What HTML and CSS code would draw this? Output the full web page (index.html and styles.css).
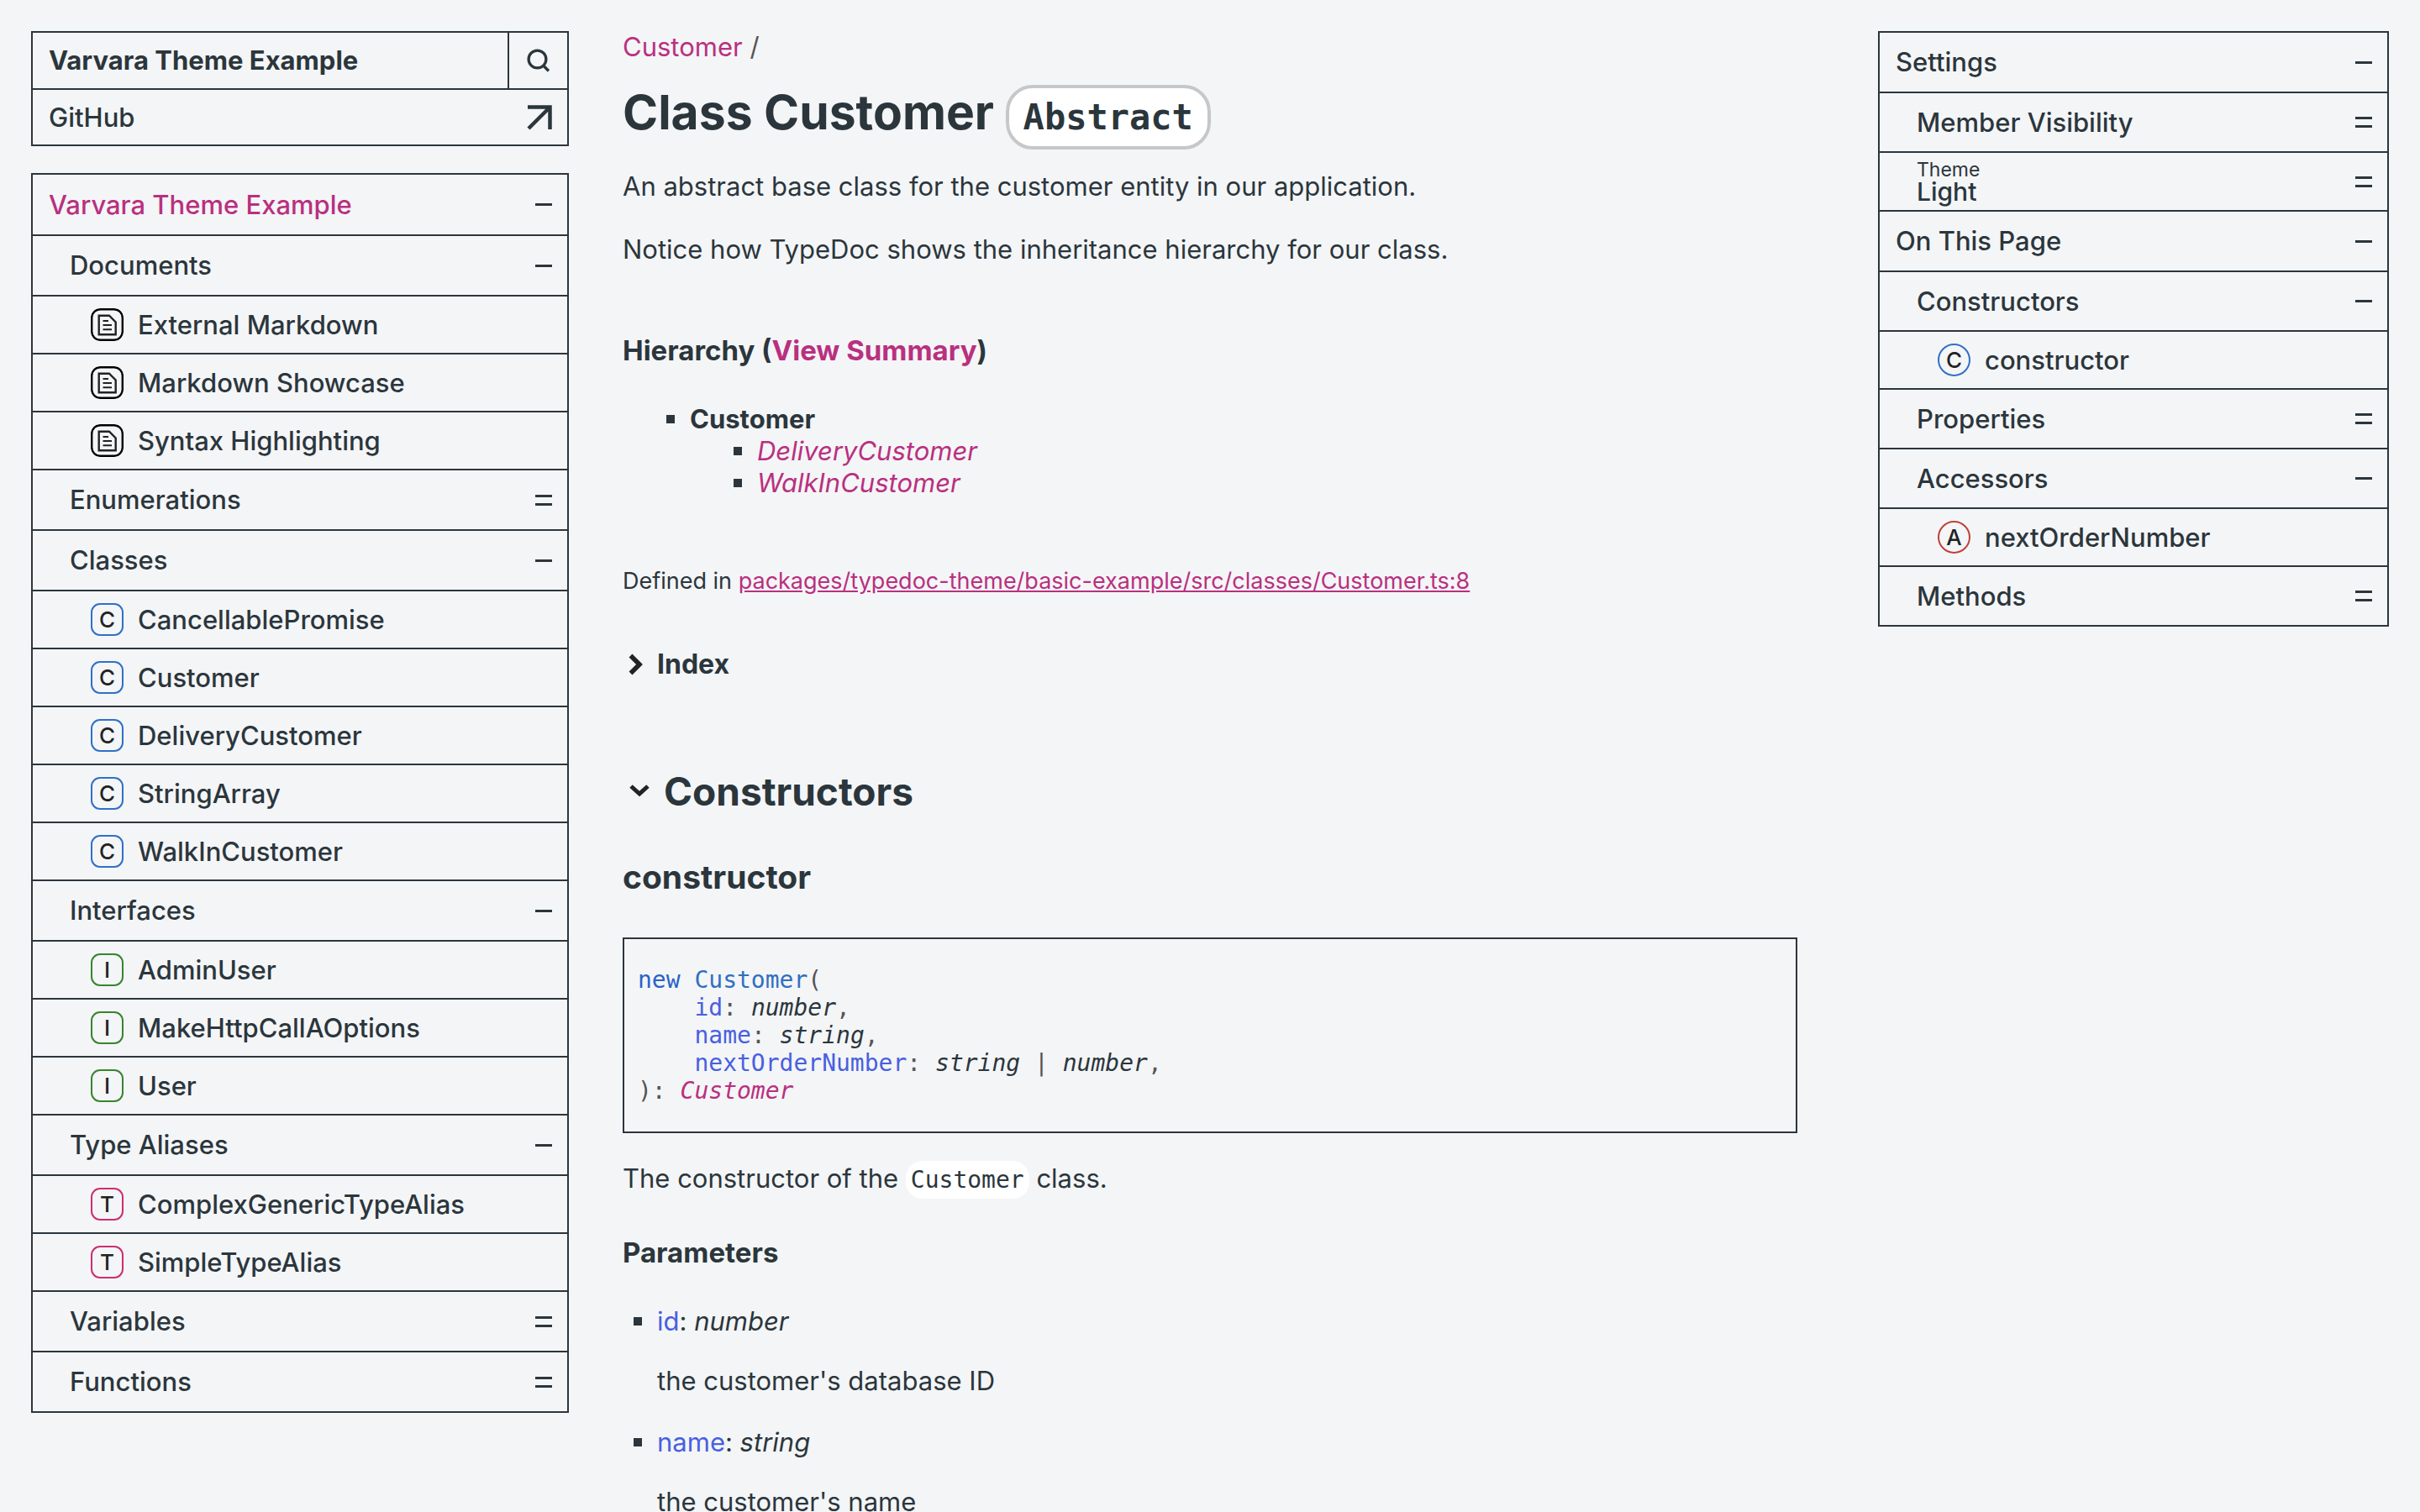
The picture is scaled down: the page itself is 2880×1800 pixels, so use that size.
FILE: index.html
```html
<!DOCTYPE html>
<html lang="en">
<head>
<meta charset="utf-8">
<title>Customer | Varvara Theme Example</title>
<link rel="stylesheet" href="styles.css">
</head>
<body>
<svg class="sprite" aria-hidden="true">
  <symbol id="doc" viewBox="0 0 39 39">
    <rect x="1.2" y="1.2" width="36.6" height="36.6" rx="10" fill="none" stroke="#000" stroke-width="2.4"/>
    <path d="M9.7 8.7H22L29.7 16.500V31.300H9.700Z" fill="none" stroke="#222" stroke-width="2.4"/>
    <path d="M14.500 15H21M14.500 20H25M14.500 25.300H25" fill="none" stroke="#222" stroke-width="2"/>
  </symbol>
</svg>
<div class="layout">
  <aside class="side">
    <header class="panel">
      <div class="bar">
        <a class="brand" href="#">Varvara Theme Example</a>
        <button class="search" type="button" aria-label="Search">
          <svg width="28" height="28" viewBox="0 0 28 28" fill="none" stroke="currentColor" stroke-width="3.3"><circle cx="12.5" cy="12.5" r="10.4"/><path d="M19.500 20L26 26.500"/></svg>
        </button>
      </div>
      <a class="bar ext" href="#">GitHub
        <svg width="30" height="30" viewBox="0 0 30 30" fill="none" stroke="currentColor" stroke-width="4.5"><path d="M1 2.500H27.500V29M27.500 2.500L2 28"/></svg>
      </a>
    </header>
    <nav class="panel" aria-label="Modules">
      <div class="row root"><a href="#">Varvara Theme Example</a><i class="mark"></i></div>
      <div class="row sub"><span>Documents</span><i class="mark"></i></div>
      <a class="row item" href="#"><svg class="kind"><use href="#doc"/></svg>External Markdown</a>
      <a class="row item" href="#"><svg class="kind"><use href="#doc"/></svg>Markdown Showcase</a>
      <a class="row item" href="#"><svg class="kind"><use href="#doc"/></svg>Syntax Highlighting</a>
      <div class="row sub"><span>Enumerations</span><i class="mark closed"></i></div>
      <div class="row sub"><span>Classes</span><i class="mark"></i></div>
      <a class="row item" href="#"><b class="kind class">C</b>CancellablePromise</a>
      <a class="row item" href="#"><b class="kind class">C</b>Customer</a>
      <a class="row item" href="#"><b class="kind class">C</b>DeliveryCustomer</a>
      <a class="row item" href="#"><b class="kind class">C</b>StringArray</a>
      <a class="row item" href="#"><b class="kind class">C</b>WalkInCustomer</a>
      <div class="row sub"><span>Interfaces</span><i class="mark"></i></div>
      <a class="row item" href="#"><b class="kind interface">I</b>AdminUser</a>
      <a class="row item" href="#"><b class="kind interface">I</b>MakeHttpCallAOptions</a>
      <a class="row item" href="#"><b class="kind interface">I</b>User</a>
      <div class="row sub"><span>Type Aliases</span><i class="mark"></i></div>
      <a class="row item" href="#"><b class="kind alias">T</b>ComplexGenericTypeAlias</a>
      <a class="row item" href="#"><b class="kind alias">T</b>SimpleTypeAlias</a>
      <div class="row sub"><span>Variables</span><i class="mark closed"></i></div>
      <div class="row sub"><span>Functions</span><i class="mark closed"></i></div>
    </nav>
  </aside>

  <main>
    <div class="crumbs"><a href="#">Customer</a> /</div>
    <h1>Class Customer <code class="flag">Abstract</code></h1>
    <p>An abstract base class for the customer entity in our application.</p>
    <p>Notice how TypeDoc shows the inheritance hierarchy for our class.</p>

    <h4 class="hier">Hierarchy (<a href="#">View Summary</a>)</h4>
    <ul class="tree">
      <li><strong>Customer</strong>
        <ul>
          <li><a href="#">DeliveryCustomer</a></li>
          <li><a href="#">WalkInCustomer</a></li>
        </ul>
      </li>
    </ul>

    <p class="source">Defined in <a href="#">packages/typedoc-theme/basic-example/src/classes/Customer.ts:8</a></p>

    <h4 class="index"><svg width="18" height="26" viewBox="0 0 18 26" fill="none" stroke="#222" stroke-width="5.5"><path d="M2.500 2.500L13 13L2.500 23.500"/></svg>Index</h4>
    <h2><svg width="26" height="18" viewBox="0 0 26 18" fill="none" stroke="#222" stroke-width="5"><path d="M3 3L13 12L23 3"/></svg>Constructors</h2>
    <h3>constructor</h3>
    <pre><span class="kw">new</span> <span class="cls">Customer</span><span class="sym">(</span>
    <span class="prm">id</span><span class="sym">:</span> <em>number</em><span class="sym">,</span>
    <span class="prm">name</span><span class="sym">:</span> <em>string</em><span class="sym">,</span>
    <span class="prm">nextOrderNumber</span><span class="sym">:</span> <em>string</em> <span class="sym">|</span> <em>number</em><span class="sym">,</span>
<span class="sym">):</span> <a href="#">Customer</a></pre>
    <p>The constructor of the <code class="chip">Customer</code> class.</p>

    <h4 class="params">Parameters</h4>
    <ul class="param-list">
      <li><span class="prm">id</span>: <em>number</em><p>the customer's database ID</p></li>
      <li><span class="prm">name</span>: <em>string</em><p>the customer's name</p></li>
    </ul>
  </main>

  <aside class="side">
    <nav class="panel toc" aria-label="On this page">
      <div class="row root"><span>Settings</span><i class="mark"></i></div>
      <div class="row sub"><span>Member Visibility</span><i class="mark closed"></i></div>
      <div class="row sub theme">
        <div class="field">
          <label for="theme">Theme</label>
          <select id="theme"><option>Light</option><option>Dark</option></select>
        </div>
        <i class="mark closed"></i>
      </div>
      <div class="row root"><span>On This Page</span><i class="mark"></i></div>
      <div class="row sub"><span>Constructors</span><i class="mark"></i></div>
      <a class="row item" href="#"><b class="kind class round">C</b>constructor</a>
      <div class="row sub"><span>Properties</span><i class="mark closed"></i></div>
      <div class="row sub"><span>Accessors</span><i class="mark"></i></div>
      <a class="row item" href="#"><b class="kind accessor round">A</b>nextOrderNumber</a>
      <div class="row sub"><span>Methods</span><i class="mark closed"></i></div>
    </nav>
  </aside>
</div>
</body>
</html>
```

FILE: styles.css
```css
:root {
  --bg: #f4f5f7;
  --text: #2b363c;
  --link: #b9307f;
  --param: #4860e0;
}

* { box-sizing: border-box; }

body {
  margin: 0;
  background: var(--bg);
  color: var(--text);
  font: 31px/38px Inter, "Liberation Sans", sans-serif;
}

a { color: var(--link); text-decoration: none; }
p, h1, h2, h3, h4, ul, pre { margin: 0; }
.sprite { display: none; }

.layout {
  display: grid;
  grid-template-columns: 640px minmax(0, 1fr) 608px;
  padding: 37px;
}

/* Side panels */
.side {
  display: flex;
  flex-direction: column;
  gap: 32px;
  font-weight: 500;
}

.panel { border: 2px solid var(--text); }
.side a { color: var(--text); }

.bar {
  display: flex;
  align-items: stretch;
  height: 66px;
}
.brand { flex: 1; padding: 14px 19px; font-weight: 700; }
.search {
  display: grid;
  place-items: center;
  width: 71px;
  padding: 0;
  border: 0;
  border-left: 2px solid var(--text);
  background: none;
  color: var(--text);
}
.ext {
  align-items: center;
  justify-content: space-between;
  height: 67px;
  padding: 0 18px 0 19px;
  border-top: 2px solid var(--text);
}

.row {
  display: flex;
  align-items: center;
  justify-content: space-between;
  height: 72px;
  padding: 0 18px 0 19px;
}
.row + .row { border-top: 2px solid var(--text); }
.row:first-child { height: 71px; }
.row.sub { padding-left: 44px; }
.row.item {
  justify-content: flex-start;
  gap: 17px;
  height: 69px;
  padding-left: 69px;
}
.side .root a { color: var(--link); }
.toc .sub { height: 71px; }
.toc .row:first-child { height: 70px; }

.mark {
  width: 20px;
  height: 3px;
  background: var(--text);
}
.closed {
  height: 13px;
  border: solid var(--text);
  border-width: 3px 0;
  background: none;
}

.kind {
  display: grid;
  place-items: center;
  width: 39px;
  height: 39px;
  flex: none;
  border: 2px solid;
  border-radius: 11px;
  color: #222;
  font-size: 26px;
  font-weight: 500;
  line-height: 30px;
}
svg.kind { border: 0; }
.class { border-color: #3070c8; }
.interface { border-color: #38842f; }
.alias { border-color: #cc2f6e; }
.accessor { border-color: #c0403a; }
.round { border-radius: 50%; }

.toc .theme { height: 70px; }
.field { display: flex; flex-direction: column; }
.field label { font-size: 23px; line-height: 24px; font-weight: 400; }
.field select {
  appearance: none;
  height: 36px;
  margin: -4px 0;
  padding: 0;
  border: 0;
  background: none;
  color: var(--text);
  font: inherit;
  font-size: 30px;
  line-height: 36px;
}

/* Article */
main { padding: 0 96px 0 64px; }
.crumbs { color: #555; }
h1 { margin-top: 23px; font-size: 57px; line-height: 72px; }
h2, h3, h4 { font-weight: 700; }
.flag {
  padding: 10px 17px;
  border: 4px solid #c5c7c9;
  border-radius: 32px;
  background: #fff;
  font: 700 42px "DejaVu Sans Mono", monospace;
}
p { margin-top: 37px; }
h1 + p { margin-top: 33px; }
h4 { font-size: 33px; line-height: 38px; }
.hier { margin-top: 82px; }

ul { list-style: none; padding: 0; }
.tree { margin-top: 44px; }
.tree li { padding-left: 80px; }
.tree a, .tree strong { display: flex; align-items: center; }
.tree a { font-style: italic; }
.tree a::before, .tree strong::before {
  content: "";
  width: 10px;
  height: 10px;
  margin-left: -28px;
  margin-right: 18px;
  background: var(--text);
}

.source { margin-top: 79px; font-size: 27px; }
.source a { text-decoration: underline; }
.index, h2 { display: flex; align-items: center; gap: 16px; padding-left: 7px; }
.index { margin-top: 61px; font-size: 32px; }
h2 { margin-top: 102px; font-size: 46px; line-height: 60px; }
h3 { margin-top: 47px; font-size: 39px; line-height: 50px; }
pre {
  margin-top: 47px;
  padding: 32px 16px;
  border: 2px solid var(--text);
  font: 28px/33px "DejaVu Sans Mono", monospace;
}
pre + p { margin-top: 35px; }
pre a { font-style: italic; }
.kw { color: #2a62c8; }
.cls { color: #3070c0; }
.prm { color: var(--param); }
.sym { color: #555; }
.chip {
  padding: 6px;
  border-radius: 20px;
  background: #fff;
  font: 28px "DejaVu Sans Mono", monospace;
}
.params { margin-top: 50px; }
.param-list { margin-top: 44px; }
.param-list li { position: relative; padding-left: 41px; }
.param-list li::before {
  content: "";
  position: absolute;
  left: 13px;
  top: 14px;
  width: 10px;
  height: 10px;
  background: var(--text);
}
.param-list p { margin-top: 33px; }
.param-list li + li { margin-top: 35px; }
```
